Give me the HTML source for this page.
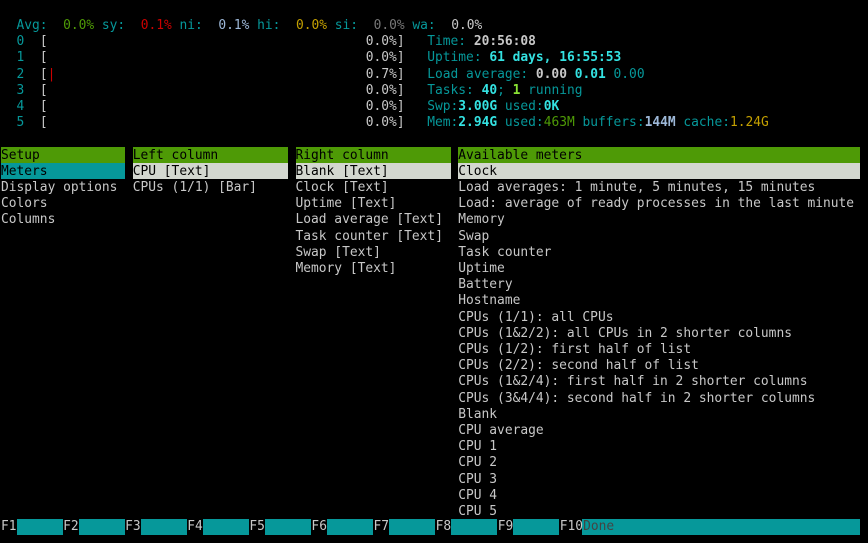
<!DOCTYPE html>
<html><head><meta charset="utf-8"><style>
html,body{margin:0;padding:0;background:#000;width:868px;height:543px;overflow:hidden}
body{position:relative;font-family:"DejaVu Sans Mono","Liberation Mono",monospace;font-size:12.9px;color:#c8c8c8}
pre{margin:0;position:absolute;font:inherit;line-height:16.2px;white-space:pre}
.bar{position:absolute;height:16px}
.c{color:#06989a}.cb{color:#34e2e2;font-weight:bold}.g{color:#4e9a06}.r{color:#cc0000}
.b{color:#9db8d8}.y{color:#c4a000}.dk{color:#777}.w{color:#c8c8c8;font-weight:bold}
.gb{color:#8ae234;font-weight:bold}.k{color:#000}
</style></head><body>
<pre style="left:1px;top:18px"><span class="c">  Avg:  </span><span class="g">0.0%</span><span class="c"> sy:  </span><span class="r">0.1%</span><span class="c"> ni:  </span><span class="b">0.1%</span><span class="c"> hi:  </span><span class="y">0.0%</span><span class="c"> si:  </span><span class="dk">0.0%</span><span class="c"> wa:  </span>0.0%
<span class="c">  0</span>  [                                         0.0%]
<span class="c">  1</span>  [                                         0.0%]
<span class="c">  2</span>  [<span class="r">|</span>                                        0.7%]
<span class="c">  3</span>  [                                         0.0%]
<span class="c">  4</span>  [                                         0.0%]
<span class="c">  5</span>  [                                         0.0%]</pre>
<pre style="left:427.25px;top:34.2px"><span class="c">Time: </span><span class="w">20:56:08</span>
<span class="c">Uptime: </span><span class="cb">61 days, 16:55:53</span>
<span class="c">Load average: </span><span class="w">0.00</span> <span class="cb">0.01</span> <span class="c">0.00</span>
<span class="c">Tasks: </span><span class="cb">40</span><span class="c">; </span><span class="gb">1</span><span class="c"> running</span>
<span class="c">Swp:</span><span class="cb">3.00G</span><span class="c"> used:</span><span class="cb">0K</span>
<span class="c">Mem:</span><span class="cb">2.94G</span><span class="c"> used:</span><span class="g">463M</span><span class="c"> buffers:</span><span class="b" style="font-weight:bold">144M</span><span class="c"> cache:</span><span class="y">1.24G</span></pre>
<div class="bar" style="left:1px;top:147px;width:124px;background:#4e9a06"></div>
<div class="bar" style="left:132.75px;top:147px;width:155px;background:#4e9a06"></div>
<div class="bar" style="left:295.5px;top:147px;width:155px;background:#4e9a06"></div>
<div class="bar" style="left:458.25px;top:147px;width:402px;background:#4e9a06"></div>
<div class="bar" style="left:1px;top:163.2px;width:124px;background:#06989a"></div>
<div class="bar" style="left:132.75px;top:163.2px;width:155px;background:#d3d7cf"></div>
<div class="bar" style="left:295.5px;top:163.2px;width:155px;background:#d3d7cf"></div>
<div class="bar" style="left:458.25px;top:163.2px;width:402px;background:#d3d7cf"></div>
<pre style="left:1px;top:147.6px"><span class="k">Setup</span>
<span class="k">Meters</span>
Display options
Colors
Columns</pre>
<pre style="left:132.75px;top:147.6px"><span class="k">Left column</span>
<span class="k">CPU [Text]</span>
CPUs (1/1) [Bar]</pre>
<pre style="left:295.5px;top:147.6px"><span class="k">Right column</span>
<span class="k">Blank [Text]</span>
Clock [Text]
Uptime [Text]
Load average [Text]
Task counter [Text]
Swap [Text]
Memory [Text]</pre>
<pre style="left:458.25px;top:147.6px"><span class="k">Available meters</span>
<span class="k">Clock</span>
Load averages: 1 minute, 5 minutes, 15 minutes
Load: average of ready processes in the last minute
Memory
Swap
Task counter
Uptime
Battery
Hostname
CPUs (1/1): all CPUs
CPUs (1&amp;2/2): all CPUs in 2 shorter columns
CPUs (1/2): first half of list
CPUs (2/2): second half of list
CPUs (1&amp;2/4): first half in 2 shorter columns
CPUs (3&amp;4/4): second half in 2 shorter columns
Blank
CPU average
CPU 1
CPU 2
CPU 3
CPU 4
CPU 5</pre>
<div class="bar" style="left:16.5px;top:519px;width:46.5px;background:#06989a"></div>
<div class="bar" style="left:78.5px;top:519px;width:46.5px;background:#06989a"></div>
<div class="bar" style="left:140.5px;top:519px;width:46.5px;background:#06989a"></div>
<div class="bar" style="left:202.5px;top:519px;width:46.5px;background:#06989a"></div>
<div class="bar" style="left:264.5px;top:519px;width:46.5px;background:#06989a"></div>
<div class="bar" style="left:326.5px;top:519px;width:46.5px;background:#06989a"></div>
<div class="bar" style="left:388.5px;top:519px;width:46.5px;background:#06989a"></div>
<div class="bar" style="left:450.5px;top:519px;width:46.5px;background:#06989a"></div>
<div class="bar" style="left:512.5px;top:519px;width:46.5px;background:#06989a"></div>
<div class="bar" style="left:582px;top:519px;width:278px;background:#06989a"></div>
<pre style="left:1px;top:519.4px">F1      F2      F3      F4      F5      F6      F7      F8      F9      F10<span style="color:#444">Done</span></pre>
</body></html>
